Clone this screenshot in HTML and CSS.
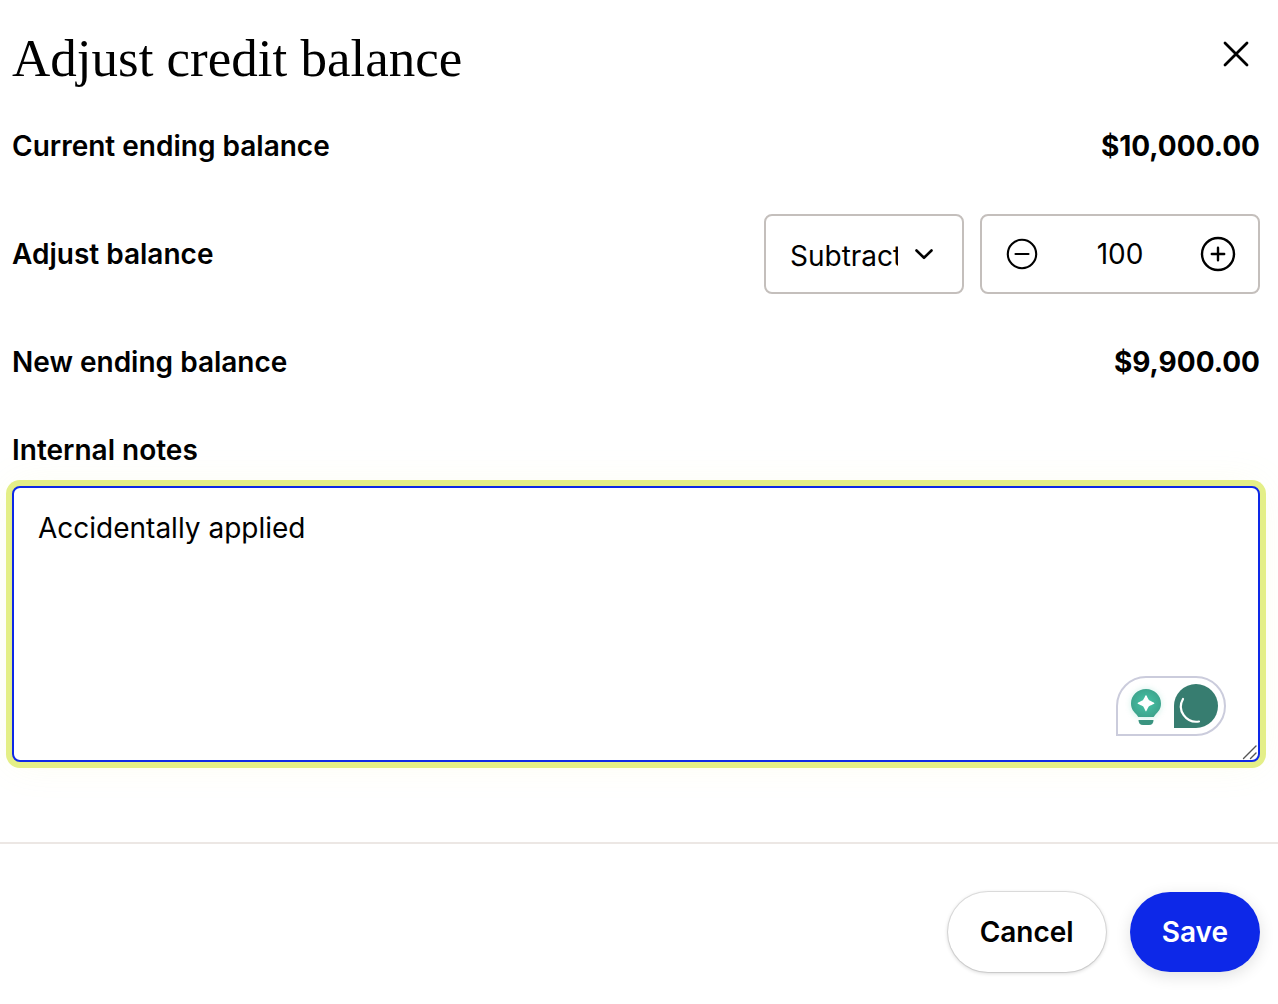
FILE: index.html
```html
<!DOCTYPE html>
<html lang="en">
<head>
    <meta charset="UTF-8">
    <meta name="viewport" content="width=device-width, initial-scale=1.0">
    <title>Adjust credit balance</title>
    <link rel="stylesheet" href="styles.css">
</head>
<body>
    <form class="modal">
        <header>
            <h1>Adjust credit balance</h1>
            <button type="button" class="close-btn" aria-label="Close">
                <svg width="48" height="48" viewBox="0 0 48 48" fill="none" stroke="currentColor" stroke-width="2.8" stroke-linecap="round">
                    <path d="M13 13L35 35M35 13L13 35"/>
                </svg>
            </button>
        </header>

        <main>
            <div class="row">
                <span>Current ending balance</span>
                <span class="amount">$10,000.00</span>
            </div>

            <div class="row">
                <label for="amount">Adjust balance</label>
                <div class="controls">
                    <div class="select">
                        <select id="direction" aria-label="Adjustment type">
                            <option>Add</option>
                            <option selected>Subtract</option>
                        </select>
                        <svg class="chevron" width="20" height="12" viewBox="0 0 20 12" fill="none" stroke="currentColor" stroke-width="2.6" stroke-linecap="round" stroke-linejoin="round">
                            <path d="M2.500 2.500L10 9.800L17.500 2.500"/>
                        </svg>
                    </div>
                    <div class="stepper">
                        <button type="button" id="decrease" aria-label="Decrease">
                            <svg width="36" height="36" viewBox="0 0 36 36" fill="none" stroke="currentColor" stroke-width="2.1" stroke-linecap="round">
                                <circle cx="18" cy="18" r="14.2"/>
                                <path d="M11.5 18H24.5"/>
                            </svg>
                        </button>
                        <input type="text" id="amount" inputmode="numeric" value="100">
                        <button type="button" id="increase" aria-label="Increase">
                            <svg width="36" height="36" viewBox="0 0 36 36" fill="none" stroke="currentColor" stroke-width="2.4" stroke-linecap="round">
                                <circle cx="18" cy="18" r="16"/>
                                <path d="M11.8 18H24.2M18 11.8V24.2"/>
                            </svg>
                        </button>
                    </div>
                </div>
            </div>

            <div class="row">
                <span>New ending balance</span>
                <output class="amount" id="new-balance">$9,900.00</output>
            </div>

            <div class="notes">
                <label for="notes">Internal notes</label>
                <div class="notes-field">
                    <textarea id="notes" spellcheck="false">Accidentally applied</textarea>
                    <svg class="grip" width="16" height="16" viewBox="0 0 16 16" fill="none" stroke="#555" stroke-width="1.4" stroke-linecap="round">
                        <path d="M1.500 14.500L14 2M8.500 14.500L14 9"/>
                    </svg>
                    <!-- Writing assistant badge -->
                    <div class="assistant">
                        <svg width="110" height="60" viewBox="0 0 110 60">
                            <defs>
                                <radialGradient id="bulb" cx="0.5" cy="0.5" r="0.6">
                                    <stop offset="0" stop-color="#45c4a6"/>
                                    <stop offset="1" stop-color="#3c9f89"/>
                                </radialGradient>
                                <filter id="glow" x="-50%" y="-50%" width="200%" height="200%">
                                    <feGaussianBlur stdDeviation="3"/>
                                </filter>
                            </defs>
                            <path d="M1 59V30A29 29 0 0 1 30 1H80A29 29 0 0 1 80 59Z" fill="#fff" stroke="#cbccdc" stroke-width="2"/>
                            <circle cx="30" cy="28" r="15" fill="#45c4a6" opacity="0.25" filter="url(#glow)"/>
                            <path d="M30 13C21.500 13 15 19.500 15 27.500C15 33 18 36 20.500 38.500C21.700 39.700 22 41 22.500 41H37.500C38 41 38.300 39.700 39.500 38.500C42 36 45 33 45 27.500C45 19.500 38.500 13 30 13Z" fill="url(#bulb)"/>
                            <path d="M30 19C30.600 19 32 23 33 24C34 25 38.500 26.500 38.500 27.200C38.500 28 34 29.300 33 30.300C32 31.300 30.600 35.500 30 35.500C29.400 35.500 28 31.300 27 30.300C26 29.300 21.500 28 21.500 27.200C21.500 26.500 26 25 27 24C28 23 29.400 19 30 19Z" fill="#fff"/>
                            <path d="M22.500 44H37.500C37.500 47 36 49 33 49H27C24 49 22.500 47 22.500 44Z" fill="#3a9480"/>
                            <path d="M58 52V30A22 22 0 1 1 80 52Z" fill="#377d70"/>
                            <path d="M67 23C60.500 34 70 47.500 83 45.500" fill="none" stroke="#fff" stroke-width="2.200" stroke-linecap="round"/>
                        </svg>
                    </div>
                </div>
            </div>
        </main>

        <footer>
            <button type="button" class="btn cancel-btn">Cancel</button>
            <button type="submit" class="btn save-btn">Save</button>
        </footer>
    </form>

    <script>
        const balance = 10000;
        const direction = document.getElementById("direction");
        const amount = document.getElementById("amount");
        const newBalance = document.getElementById("new-balance");

        function updateBalance() {
            const value = Number(amount.value) || 0;
            const total = direction.value === "Subtract" ? balance - value : balance + value;
            newBalance.textContent = total.toLocaleString("en-US", {
                style: "currency",
                currency: "USD",
            });
        }

        function step(change) {
            amount.value = Math.max(0, (Number(amount.value) || 0) + change);
            updateBalance();
        }

        document.getElementById("decrease").addEventListener("click", () => step(-1));
        document.getElementById("increase").addEventListener("click", () => step(1));
        amount.addEventListener("input", updateBalance);
        direction.addEventListener("change", updateBalance);
        document.querySelector(".modal").addEventListener("submit", event => event.preventDefault());
    </script>
</body>
</html>
```
FILE: styles.css
```css
* {
    box-sizing: border-box;
}

body {
    margin: 0;
    background: #fff;
    color: #000;
    font-family: Inter, "Liberation Sans", sans-serif;
    font-size: 28px;
    line-height: 40px;
}

button,
input,
select,
textarea {
    font: inherit;
    color: inherit;
}

button {
    border: none;
    background: none;
    padding: 0;
    cursor: pointer;
}

header {
    display: flex;
    justify-content: space-between;
    align-items: flex-start;
    padding: 24px 18px 0 12px;
    margin-bottom: 34px;
}

h1 {
    margin: 0;
    font-family: "Liberation Serif", serif;
    font-size: 53px;
    font-weight: 400;
    line-height: 68px;
}

.close-btn {
    display: flex;
    align-items: center;
    height: 60px;
}

main {
    display: flex;
    flex-direction: column;
    gap: 48px;
    padding: 0 18px 80px 12px;
}

.row {
    display: flex;
    justify-content: space-between;
    align-items: center;
    font-weight: 600;
}

.amount {
    font-weight: 700;
}

.controls {
    display: flex;
    gap: 16px;
    font-weight: 400;
}

.select {
    position: relative;
    width: 200px;
}

.select select {
    width: 100%;
    height: 80px;
    padding: 4px 64px 0 24px;
    border: 2px solid #c4bfbc;
    border-radius: 8px;
    background: #fff;
    appearance: none;
}

.chevron {
    position: absolute;
    top: 34px;
    right: 30px;
    pointer-events: none;
}

.stepper {
    display: flex;
    justify-content: space-between;
    align-items: center;
    width: 280px;
    height: 80px;
    padding: 0 22px;
    border: 2px solid #c4bfbc;
    border-radius: 8px;
}

.stepper button {
    display: flex;
}

.stepper input {
    width: 120px;
    padding: 0;
    border: none;
    outline: none;
    background: none;
    text-align: center;
}

.notes {
    display: flex;
    flex-direction: column;
    gap: 16px;
}

.notes label {
    font-weight: 600;
}

.notes-field {
    position: relative;
}

textarea {
    display: block;
    width: 100%;
    height: 276px;
    padding: 20px 24px;
    border: 2px solid #0d28e8;
    border-radius: 8px;
    outline: none;
    box-shadow: 0 0 0 6px #e4ef87, 0 0 40px rgba(228, 239, 135, 0.12);
    resize: vertical;
}

textarea::-webkit-resizer {
    background: transparent;
}

.grip {
    position: absolute;
    right: 2px;
    bottom: 2px;
    pointer-events: none;
}

.assistant {
    position: absolute;
    right: 34px;
    bottom: 26px;
    display: flex;
}

footer {
    display: flex;
    justify-content: flex-end;
    gap: 24px;
    padding: 48px 18px 32px;
    border-top: 2px solid #ece7e4;
}

.btn {
    height: 80px;
    padding: 0 32px;
    border-radius: 40px;
    font-weight: 600;
}

.cancel-btn {
    background: #fff;
    box-shadow: 0 0 0 1px rgba(0, 0, 0, 0.1), 0 1px 4px rgba(0, 0, 0, 0.2);
}

.save-btn {
    background: #0d28e8;
    color: #fff;
    box-shadow: 0 4px 16px rgba(0, 0, 0, 0.12);
}
```
